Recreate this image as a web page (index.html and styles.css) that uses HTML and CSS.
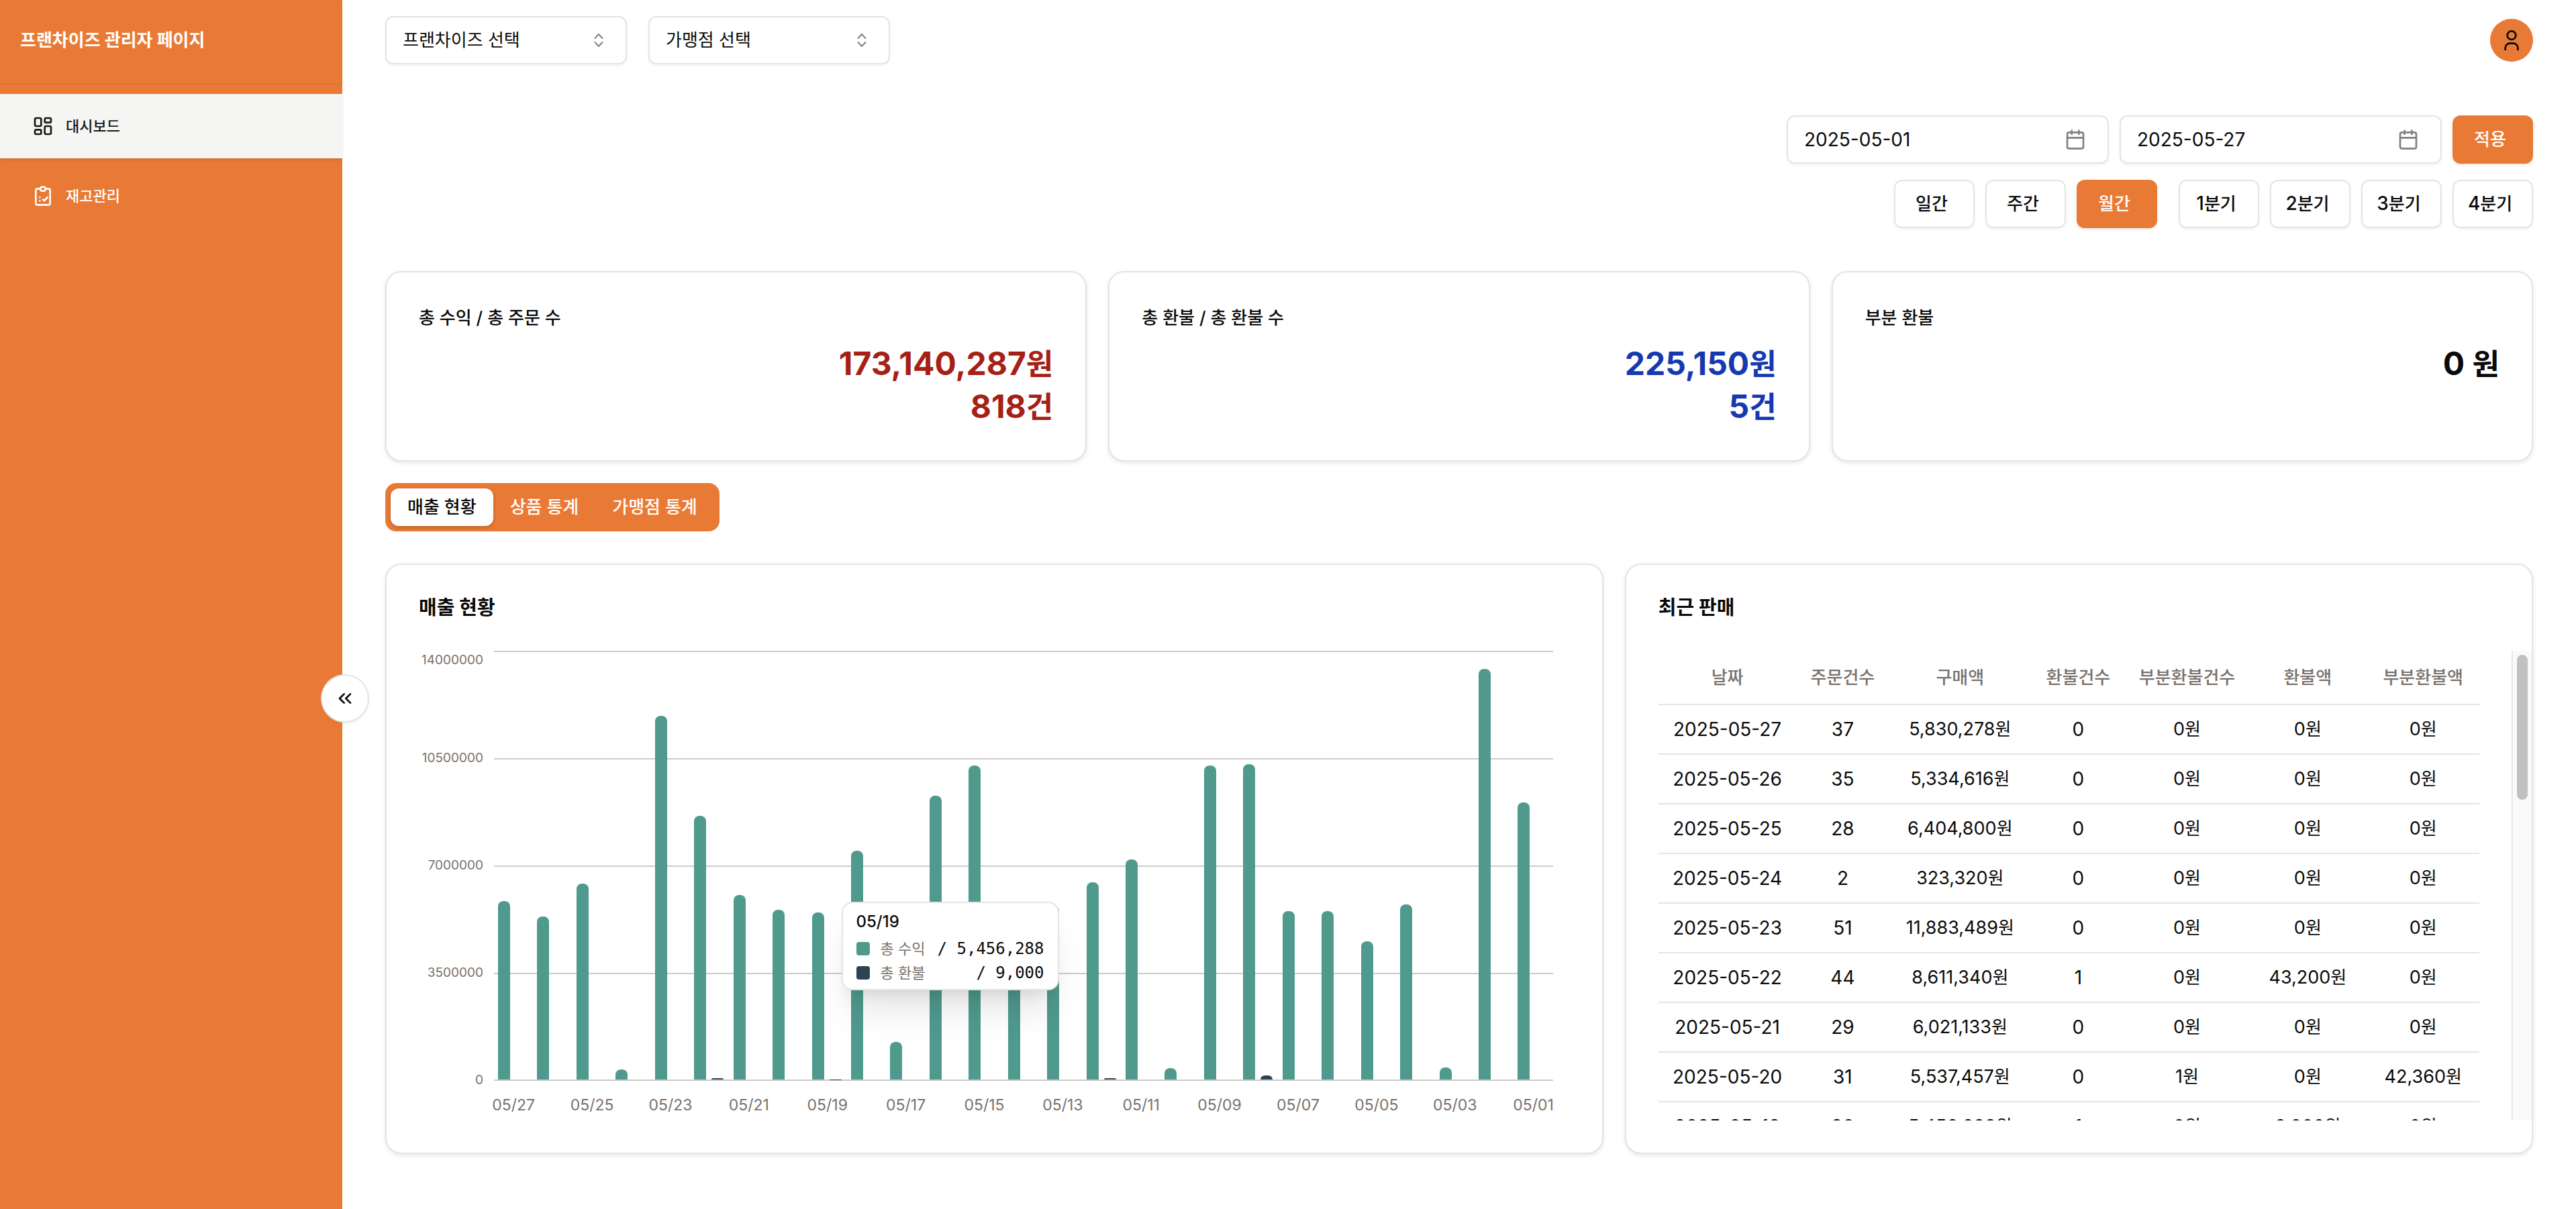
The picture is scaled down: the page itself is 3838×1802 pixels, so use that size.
FILE: index.html
```html
<!DOCTYPE html>
<html lang="ko">
<head>
<meta charset="utf-8">
<title>프랜차이즈 관리자 페이지</title>
<link rel="stylesheet" href="styles.css">
</head>
<body>
<div class="app">
  <aside class="sidebar">
    <div class="brand">프랜차이즈 관리자 페이지</div>
    <nav class="nav">
      <a class="nav-item nav-item-active" href="#dashboard">
        <svg class="icon" viewBox="0 0 24 24"><rect x="3" y="3" width="7" height="9" rx="1.500"/><rect x="14" y="3" width="7" height="5" rx="1.500"/><rect x="14" y="12" width="7" height="9" rx="1.500"/><rect x="3" y="16" width="7" height="5" rx="1.500"/></svg>
        대시보드
      </a>
      <a class="nav-item" href="#stock">
        <svg class="icon" viewBox="0 0 24 24"><path d="M9 4H6a2 2 0 0 0-2 2v14a2 2 0 0 0 2 2h12a2 2 0 0 0 2-2V6a2 2 0 0 0-2-2h-3"/><rect x="9" y="2" width="6" height="4.500" rx="2.200"/><path d="M8.500 13.500h.01M8.500 17.500h.01M12 16l1.500 1.500 3.500-4"/></svg>
        재고관리
      </a>
    </nav>
    <button class="collapse" type="button" aria-label="메뉴 접기">
      <svg class="icon" viewBox="0 0 24 24"><path d="m11 17-5-5 5-5M18 17l-5-5 5-5"/></svg>
    </button>
  </aside>

  <div class="page">
    <header class="topbar">
      <div class="select">
        <select class="select-field" aria-label="프랜차이즈 선택"><option>프랜차이즈 선택</option></select>
        <svg class="select-icon" viewBox="0 0 24 24"><path d="m6.500 9 5.500-6 5.500 6M6.500 15l5.500 6 5.500-6"/></svg>
      </div>
      <div class="select">
        <select class="select-field" aria-label="가맹점 선택"><option>가맹점 선택</option></select>
        <svg class="select-icon" viewBox="0 0 24 24"><path d="m6.500 9 5.500-6 5.500 6M6.500 15l5.500 6 5.500-6"/></svg>
      </div>
      <button class="avatar" type="button" aria-label="내 계정">
        <svg class="icon" viewBox="0 0 24 24"><circle cx="12" cy="6.500" r="4.750"/><path d="M5 22.500v-2a5 5 0 0 1 5-5h4a5 5 0 0 1 5 5v2"/></svg>
      </button>
    </header>

    <main class="content">
      <section class="filters">
        <div class="filter-row">
          <label class="date">
            <input class="date-field" type="text" value="2025-05-01" aria-label="시작일">
            <svg class="icon" viewBox="0 0 24 24"><rect x="3" y="4" width="18" height="18" rx="2"/><path d="M3 10h18M8 2v4M16 2v4"/></svg>
          </label>
          <label class="date">
            <input class="date-field" type="text" value="2025-05-27" aria-label="종료일">
            <svg class="icon" viewBox="0 0 24 24"><rect x="3" y="4" width="18" height="18" rx="2"/><path d="M3 10h18M8 2v4M16 2v4"/></svg>
          </label>
          <button class="btn btn-primary" type="button">적용</button>
        </div>
        <div class="filter-groups">
          <div class="filter-row">
            <button class="btn" type="button">일간</button>
            <button class="btn" type="button">주간</button>
            <button class="btn btn-primary" type="button">월간</button>
          </div>
          <div class="filter-row">
            <button class="btn" type="button"><span class="num">1</span>분기</button>
            <button class="btn" type="button"><span class="num">2</span>분기</button>
            <button class="btn" type="button"><span class="num">3</span>분기</button>
            <button class="btn" type="button"><span class="num">4</span>분기</button>
          </div>
        </div>
      </section>

      <section class="stats">
        <article class="card">
          <h2 class="stat-title">총 수익 / 총 주문 수</h2>
          <p class="stat-value stat-red">173,140,287<span class="stat-unit">원</span><br>818<span class="stat-unit">건</span></p>
        </article>
        <article class="card">
          <h2 class="stat-title">총 환불 / 총 환불 수</h2>
          <p class="stat-value stat-blue">225,150<span class="stat-unit">원</span><br>5<span class="stat-unit">건</span></p>
        </article>
        <article class="card">
          <h2 class="stat-title">부분 환불</h2>
          <p class="stat-value">0 <span class="stat-unit">원</span></p>
        </article>
      </section>

      <div class="tabs" role="tablist">
        <button class="tab tab-active" type="button" role="tab" aria-selected="true">매출 현황</button>
        <button class="tab" type="button" role="tab" aria-selected="false">상품 통계</button>
        <button class="tab" type="button" role="tab" aria-selected="false">가맹점 통계</button>
      </div>

      <section class="panels">
        <article class="card panel-chart">
          <h2 class="panel-title">매출 현황</h2>
          <div class="chart">
            <div class="y-axis"><span class="y-top">14000000</span><span>10500000</span><span>7000000</span><span>3500000</span><span>0</span></div>
            <div class="plot-area">
              <div class="plot">
                <div class="slot"><i class="bar" style="height:41.64%"></i></div>
                <div class="slot"><i class="bar" style="height:38.1%"></i></div>
                <div class="slot"><i class="bar" style="height:45.75%"></i></div>
                <div class="slot"><i class="bar" style="height:2.31%"></i></div>
                <div class="slot"><i class="bar" style="height:84.88%"></i></div>
                <div class="slot"><i class="bar" style="height:61.51%"></i><i class="bar bar-refund" style="height:0.31%"></i></div>
                <div class="slot"><i class="bar" style="height:43.01%"></i></div>
                <div class="slot"><i class="bar" style="height:39.55%"></i></div>
                <div class="slot"><i class="bar" style="height:38.97%"></i><i class="bar bar-refund" style="height:0.06%"></i></div>
                <div class="slot"><i class="bar" style="height:53.4%"></i></div>
                <div class="slot"><i class="bar" style="height:8.8%"></i></div>
                <div class="slot"><i class="bar" style="height:66.2%"></i></div>
                <div class="slot"><i class="bar" style="height:73.3%"></i></div>
                <div class="slot"><i class="bar" style="height:30%"></i></div>
                <div class="slot"><i class="bar" style="height:40.5%"></i></div>
                <div class="slot"><i class="bar" style="height:46.05%"></i><i class="bar bar-refund" style="height:0.25%"></i></div>
                <div class="slot"><i class="bar" style="height:51.3%"></i></div>
                <div class="slot"><i class="bar" style="height:2.66%"></i></div>
                <div class="slot"><i class="bar" style="height:73.3%"></i></div>
                <div class="slot"><i class="bar" style="height:73.6%"></i><i class="bar bar-refund" style="height:1%"></i></div>
                <div class="slot"><i class="bar" style="height:39.3%"></i></div>
                <div class="slot"><i class="bar" style="height:39.3%"></i></div>
                <div class="slot"><i class="bar" style="height:32.3%"></i></div>
                <div class="slot"><i class="bar" style="height:40.8%"></i></div>
                <div class="slot"><i class="bar" style="height:2.75%"></i></div>
                <div class="slot"><i class="bar" style="height:95.8%"></i></div>
                <div class="slot"><i class="bar" style="height:64.6%"></i></div>
                <div class="tooltip">
                  <div class="tooltip-title">05/19</div>
                  <div class="tooltip-row"><i class="swatch"></i><span class="tooltip-label">총 수익</span><span class="tooltip-value">/ 5,456,288</span></div>
                  <div class="tooltip-row"><i class="swatch swatch-refund"></i><span class="tooltip-label">총 환불</span><span class="tooltip-value">/ 9,000</span></div>
                </div>
              </div>
              <div class="x-axis"><span>05/27</span><span></span><span>05/25</span><span></span><span>05/23</span><span></span><span>05/21</span><span></span><span>05/19</span><span></span><span>05/17</span><span></span><span>05/15</span><span></span><span>05/13</span><span></span><span>05/11</span><span></span><span>05/09</span><span></span><span>05/07</span><span></span><span>05/05</span><span></span><span>05/03</span><span></span><span>05/01</span></div>
            </div>
          </div>
        </article>

        <article class="card panel-table">
          <h2 class="panel-title">최근 판매</h2>
          <div class="table-area">
            <div class="table-clip">
              <table class="sales">
                <colgroup><col class="c1"><col class="c2"><col class="c3"><col class="c4"><col class="c5"><col class="c6"><col class="c7"></colgroup>
                <thead><tr><th>날짜</th><th>주문건수</th><th>구매액</th><th>환불건수</th><th>부분환불건수</th><th>환불액</th><th>부분환불액</th></tr></thead>
                <tbody>
                  <tr><td>2025-05-27</td><td>37</td><td class="money">5,830,278<span class="won">원</span></td><td>0</td><td class="money">0<span class="won">원</span></td><td class="money">0<span class="won">원</span></td><td class="money">0<span class="won">원</span></td></tr>
                  <tr><td>2025-05-26</td><td>35</td><td class="money">5,334,616<span class="won">원</span></td><td>0</td><td class="money">0<span class="won">원</span></td><td class="money">0<span class="won">원</span></td><td class="money">0<span class="won">원</span></td></tr>
                  <tr><td>2025-05-25</td><td>28</td><td class="money">6,404,800<span class="won">원</span></td><td>0</td><td class="money">0<span class="won">원</span></td><td class="money">0<span class="won">원</span></td><td class="money">0<span class="won">원</span></td></tr>
                  <tr><td>2025-05-24</td><td>2</td><td class="money">323,320<span class="won">원</span></td><td>0</td><td class="money">0<span class="won">원</span></td><td class="money">0<span class="won">원</span></td><td class="money">0<span class="won">원</span></td></tr>
                  <tr><td>2025-05-23</td><td>51</td><td class="money">11,883,489<span class="won">원</span></td><td>0</td><td class="money">0<span class="won">원</span></td><td class="money">0<span class="won">원</span></td><td class="money">0<span class="won">원</span></td></tr>
                  <tr><td>2025-05-22</td><td>44</td><td class="money">8,611,340<span class="won">원</span></td><td>1</td><td class="money">0<span class="won">원</span></td><td class="money">43,200<span class="won">원</span></td><td class="money">0<span class="won">원</span></td></tr>
                  <tr><td>2025-05-21</td><td>29</td><td class="money">6,021,133<span class="won">원</span></td><td>0</td><td class="money">0<span class="won">원</span></td><td class="money">0<span class="won">원</span></td><td class="money">0<span class="won">원</span></td></tr>
                  <tr><td>2025-05-20</td><td>31</td><td class="money">5,537,457<span class="won">원</span></td><td>0</td><td class="money">1<span class="won">원</span></td><td class="money">0<span class="won">원</span></td><td class="money">42,360<span class="won">원</span></td></tr>
                  <tr><td>2025-05-19</td><td>30</td><td class="money">5,456,288<span class="won">원</span></td><td>1</td><td class="money">0<span class="won">원</span></td><td class="money">9,000<span class="won">원</span></td><td class="money">0<span class="won">원</span></td></tr>
                </tbody>
              </table>
            </div>
            <div class="scrollbar"><div class="thumb"></div></div>
          </div>
        </article>
      </section>
    </main>
  </div>
</div>
</body>
</html>
```
FILE: styles.css
```css
:root {
  --orange: #e97a35;
  --teal: #4f9a8d;
  --navy: #2d4452;
  --ink: #0a0a0a;
  --muted: #78716c;
  --line: #e4e4e4;
  --hangul: 26px;
  --money: 27px;
  --latin: 28px;
}

* { box-sizing: border-box; }

body {
  margin: 0;
  background: #fff;
  color: var(--ink);
  font-family: Inter, "Noto Sans CJK KR", sans-serif;
  font-size: var(--hangul);
  line-height: 40px;
}

button, input, select { font: inherit; color: inherit; }
button { padding: 0; border: 0; cursor: pointer; }
h2, p { margin: 0; }

svg {
  display: block;
  flex: none;
  fill: none;
  stroke: currentColor;
  stroke-width: 2;
  stroke-linecap: round;
  stroke-linejoin: round;
}
.icon { width: 32px; height: 32px; }

.app { display: flex; min-height: 100vh; }

/* Sidebar */
.sidebar {
  position: relative;
  flex: none;
  width: 510px;
  background: var(--orange);
  color: #fff;
}
.brand {
  display: flex;
  align-items: center;
  height: 124px;
  padding: 0 30px 4px;
  font-weight: 700;
  box-shadow: 0 2px 4px rgba(0, 0, 0, .07);
}
.nav { display: flex; flex-direction: column; gap: 8px; padding-top: 16px; }
.nav-item {
  display: flex;
  align-items: center;
  gap: 18px;
  height: 96px;
  padding: 0 48px;
  color: #fff;
  font-size: 22px;
  font-weight: 500;
  text-decoration: none;
}
.nav-item-active {
  background: #f5f5f4;
  color: #1c1917;
  box-shadow: 0 2px 4px rgba(0, 0, 0, .1);
}
.collapse {
  position: absolute;
  top: 1005px;
  right: -40px;
  display: grid;
  place-items: center;
  width: 72px;
  height: 72px;
  border: 2px solid var(--line);
  border-radius: 50%;
  background: #fff;
  color: var(--ink);
  box-shadow: 0 2px 4px rgba(0, 0, 0, .05);
}

/* Top bar */
.page { flex: 1; min-width: 0; }
.topbar {
  display: flex;
  align-items: center;
  gap: 32px;
  height: 120px;
  padding: 0 64px;
}
.select { display: grid; align-items: center; width: 360px; }
.select-field {
  grid-area: 1 / 1;
  height: 72px;
  padding: 0 24px;
  border: 2px solid var(--line);
  border-radius: 12px;
  background: #fff;
  appearance: none;
  font-weight: 400;
  box-shadow: 0 2px 4px rgba(0, 0, 0, .05);
}
.select-icon {
  grid-area: 1 / 1;
  justify-self: end;
  width: 24px;
  height: 24px;
  margin-right: 30px;
  color: #808080;
  pointer-events: none;
}
.avatar {
  display: grid;
  place-items: center;
  width: 64px;
  height: 64px;
  margin-left: auto;
  border-radius: 50%;
  background: var(--orange);
  color: var(--ink);
}

/* Filters */
.content { padding: 52px 64px 64px; }
.filters {
  display: flex;
  flex-direction: column;
  align-items: flex-end;
  gap: 24px;
  margin-bottom: 64px;
}
.filter-row { display: flex; gap: 16px; }
.filter-groups { display: flex; gap: 32px; }
.date {
  display: flex;
  align-items: center;
  width: 480px;
  height: 72px;
  padding: 0 32px 0 24px;
  border: 2px solid var(--line);
  border-radius: 12px;
  color: #808080;
  box-shadow: 0 2px 4px rgba(0, 0, 0, .05);
}
.date-field {
  flex: 1;
  min-width: 0;
  padding: 0;
  border: 0;
  outline: 0;
  background: none;
  color: var(--ink);
  font-size: var(--latin);
}
.btn {
  width: 120px;
  height: 72px;
  padding-right: 8px;
  border: 2px solid var(--line);
  border-radius: 12px;
  background: #fff;
  font-weight: 500;
  box-shadow: 0 2px 4px rgba(0, 0, 0, .05);
}
.btn-primary {
  border-color: var(--orange);
  background: var(--orange);
  color: #fff;
  box-shadow: 0 2px 4px rgba(0, 0, 0, .1);
}
.num { font-size: var(--latin); line-height: 1; }

/* Cards */
.card {
  min-width: 0;
  padding: 48px;
  border: 2px solid var(--line);
  border-radius: 24px;
  background: #fff;
  box-shadow: 0 2px 6px rgba(0, 0, 0, .1);
}
.stats {
  display: grid;
  grid-template-columns: repeat(3, 1fr);
  gap: 32px;
  margin-bottom: 32px;
}
.stat-title { margin-bottom: 16px; font-size: var(--hangul); font-weight: 500; }
.stat-value {
  font-size: 48px;
  font-weight: 700;
  line-height: 64px;
  text-align: right;
}
.stat-unit { font-size: 44px; line-height: 1; }
.stat-red { color: #a62015; }
.stat-blue { color: #1539af; }

/* Tabs */
.tabs {
  display: inline-flex;
  margin-bottom: 48px;
  padding: 8px;
  border-radius: 16px;
  background: var(--orange);
  vertical-align: top;
}
.tab {
  height: 56px;
  padding: 0 25px;
  border-radius: 12px;
  background: none;
  color: #fff;
  font-weight: 500;
}
.tab-active {
  background: #fff;
  color: var(--ink);
  box-shadow: 0 2px 6px rgba(0, 0, 0, .2);
}

/* Panels */
.panels { display: grid; grid-template-columns: repeat(7, 1fr); gap: 32px; }
.panel-chart { grid-column: span 4; }
.panel-table { grid-column: span 3; padding-right: 0; }
.panel-title {
  margin-bottom: 48px;
  font-size: 29px;
  font-weight: 700;
  line-height: 32px;
}

/* Chart */
.chart { display: flex; height: 700px; padding-right: 25px; color: var(--muted); }
.y-axis {
  display: flex;
  flex-direction: column;
  justify-content: space-between;
  width: 112px;
  height: 680px;
  margin-top: -20px;
  padding-right: 16px;
  font-size: 19px;
  text-align: right;
}
.y-axis span { height: 40px; }
.y-top { padding-top: 14px; }
.plot-area { flex: 1; min-width: 0; }
.plot {
  position: relative;
  display: flex;
  height: 641px;
  background: repeating-linear-gradient(#ccc 0 2px, transparent 2px 160px);
  border-bottom: 2px solid #ccc;
}
.slot {
  display: flex;
  flex: 1;
  align-items: flex-end;
  gap: 8px;
  min-width: 0;
  padding-left: 6px;
}
.bar {
  flex: none;
  width: 18px;
  border-radius: 8px 8px 0 0;
  background: var(--teal);
}
.bar-refund { background: var(--navy); }
.x-axis { display: flex; padding-top: 16px; font-size: 23px; }
.x-axis span {
  display: flex;
  flex: 1;
  justify-content: center;
  min-width: 0;
}

.tooltip {
  position: absolute;
  top: 374px;
  left: 32.8%;
  width: 324px;
  height: 132px;
  padding: 10px 20px;
  border: 2px solid var(--line);
  border-radius: 16px;
  background: #fff;
  color: var(--ink);
  font-size: 24px;
  line-height: 36px;
  box-shadow: 0 40px 50px -10px rgba(0, 0, 0, .1), 0 16px 20px -12px rgba(0, 0, 0, .1);
}
.tooltip-title { margin-bottom: 4px; font-weight: 500; }
.tooltip-row { display: flex; align-items: center; gap: 16px; height: 36px; }
.tooltip-label { color: var(--muted); font-size: 22px; }
.tooltip-value {
  margin-left: auto;
  font-family: "DejaVu Sans Mono", monospace;
  font-size: 24px;
}
.swatch { width: 20px; height: 20px; border-radius: 4px; background: var(--teal); }
.swatch-refund { background: var(--navy); }

/* Sales table */
.table-area { display: flex; height: 700px; }
.table-clip { flex: 1; min-width: 0; padding-right: 48px; overflow: hidden; }
.sales {
  width: 100%;
  border-spacing: 0;
  table-layout: fixed;
  text-align: center;
  white-space: nowrap;
}
.c1 { width: 16.8%; }
.c2 { width: 11.3%; }
.c3 { width: 17.3%; }
.c4 { width: 11.5%; }
.c5 { width: 15%; }
.c6 { width: 14.4%; }
.c7 { width: 13.7%; }
.sales th, .sales td { padding: 0; border-bottom: 2px solid var(--line); }
.sales th { height: 81px; color: var(--muted); font-weight: 500; }
.sales td { height: 74px; font-size: var(--latin); }
.sales .money { font-size: var(--money); }
.won { font-size: var(--hangul); line-height: 1; }
.scrollbar {
  width: 30px;
  padding: 6px;
  border-left: 2px solid #e8e8e8;
  background: #fafafa;
}
.thumb { width: 16px; height: 216px; border-radius: 8px; background: #c1c1c1; }
```
